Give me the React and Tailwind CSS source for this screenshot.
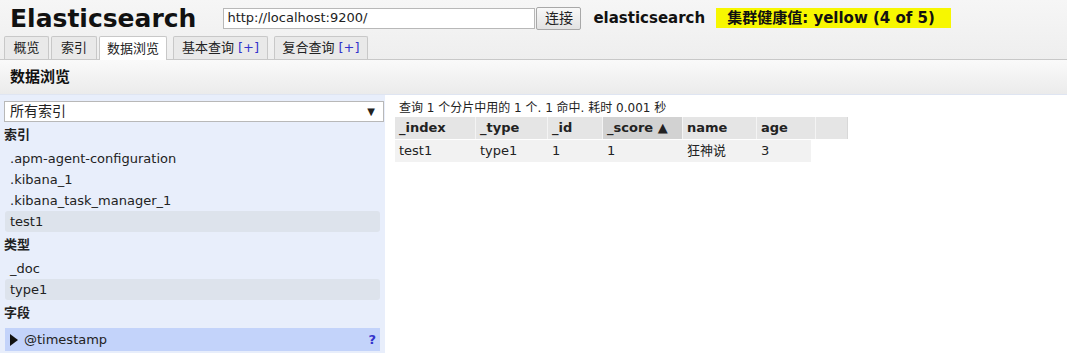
import React from "react";

const F = { fontFamily: '"DejaVu Sans", "Noto Sans CJK SC", sans-serif' };

function Tab({ children, active, w }) {
  return (
    <div
      className={`h-[23px] flex items-center justify-center border border-[#c8c8c8] border-b-0 rounded-t-[2px] text-[13px] text-[#222] ${
        active ? "bg-white h-[24px] -mb-px relative z-10" : "bg-[#e9e9e9]"
      } ${w}`}
    >
      {children}
    </div>
  );
}

function Row({ children, sel }) {
  return (
    <div
      className={`h-[21px] flex items-center pl-[5px] text-[13px] text-[#222] mx-[5px] rounded-[3px] ${
        sel ? "bg-[#dde3ec]" : ""
      }`}
    >
      {children}
    </div>
  );
}

function Section({ children }) {
  return (
    <div className="h-[26px] flex items-center pl-[4px] text-[13px] font-bold text-[#222]">
      {children}
    </div>
  );
}

const cols = [
  { name: "_index", w: "w-[81px]", v: "test1" },
  { name: "_type", w: "w-[72px]", v: "type1" },
  { name: "_id", w: "w-[55px]", v: "1" },
  { name: "_score ▲", w: "w-[80px]", v: "1", sorted: true },
  { name: "name", w: "w-[74px]", v: "狂神说" },
  { name: "age", w: "w-[59px]", v: "3" },
];

export default function App() {
  return (
    <div style={F} className="w-[1067px] h-[353px] bg-white overflow-hidden text-[#111]">
      {/* header */}
      <div className="bg-gradient-to-b from-[#f6f6f6] to-[#eeeeee]">
        <div className="h-[38px] flex items-center pl-[10px]">
          <div className="text-[25px] font-bold leading-none text-[#111] -mt-[2px]">
            Elasticsearch
          </div>
          <div className="ml-[27px] w-[312px] h-[21px] bg-white border border-[#b8b8b8] flex items-center pl-[3px] text-[13px] text-[#222] -mt-[2px]">
            http://localhost:9200/
          </div>
          <div className="ml-[1px] w-[45px] h-[23px] border border-[#a8a8a8] rounded-[2px] bg-gradient-to-b from-[#f8f8f8] to-[#e2e2e2] flex items-center justify-center text-[14px] text-[#222] -mt-[2px]">
            连接
          </div>
          <div className="ml-[12px] text-[15px] font-bold text-[#111] -mt-[2px]">elasticsearch</div>
          <div className="ml-[11px] h-[20px] w-[235px] bg-[#f7f700] flex items-center pl-[11px] text-[15px] font-bold text-[#111] -mt-[2px]">
            集群健康值: yellow (4 of 5)
          </div>
        </div>
        <div className="h-[22px] flex items-end pl-[4px] gap-[2px] border-b border-[#c8c8c8]">
          <Tab w="w-[45px]">概览</Tab>
          <Tab w="w-[46px]">索引</Tab>
          <Tab active w="w-[68px]">数据浏览</Tab>
          <div className="w-[2px]" />
          <Tab w="w-[95px]">
            基本查询&nbsp;<span className="text-[#3333cc]">[+]</span>
          </Tab>
          <div className="w-[2px]" />
          <Tab w="w-[94px]">
            复合查询&nbsp;<span className="text-[#3333cc]">[+]</span>
          </Tab>
        </div>
      </div>
      {/* section header */}
      <div className="h-[35px] bg-gradient-to-b from-[#fafafa] to-[#ebebeb] border-b border-[#dfe5f2] flex items-center pl-[10px] text-[15px] font-bold text-[#111]">
        数据浏览
      </div>
      {/* body */}
      <div className="flex">
        <div className="w-[385px] h-[258px] bg-[#e8eefb] pt-[6px]">
          <div className="mx-[4px] w-[380px] h-[21px] bg-white border border-[#b8b8b8] flex items-center justify-between pl-[5px] pr-[8px] text-[14px] text-[#222]">
            <span>所有索引</span>
            <span className="text-[10px]">▼</span>
          </div>
          <Section>索引</Section>
          <Row>.apm-agent-configuration</Row>
          <Row>.kibana_1</Row>
          <Row>.kibana_task_manager_1</Row>
          <Row sel>test1</Row>
          <Section>类型</Section>
          <Row>_doc</Row>
          <Row sel>type1</Row>
          <Section>字段</Section>
          <div className="mx-[5px] mt-[2px] h-[23px] bg-[#c3d3fa] flex items-center pl-[5px] pr-[4px] justify-between text-[13px] text-[#222]">
            <span className="flex items-center gap-[6px]">
              <svg width="8" height="12" viewBox="0 0 8 12">
                <path d="M0 0 L8 6 L0 12 Z" fill="#111" />
              </svg>
              @timestamp
            </span>
            <span className="text-[#3333cc] font-bold">?</span>
          </div>
        </div>
        <div className="flex-1 pl-[10px] pt-[3px]">
          <div className="h-[19px] flex items-center pl-[4px] text-[12px] text-[#222]">
            查询 1 个分片中用的 1 个. 1 命中. 耗时 0.001 秒
          </div>
          <div className="flex h-[22px] bg-[#e5e5e5] w-[453px]">
            {cols.map((c) => (
              <div
                key={c.name}
                className={`${c.w} h-full flex items-center pl-[4px] text-[13px] font-bold text-[#222] border-r border-[#f4f4f4] ${
                  c.sorted ? "bg-[#d2d2d2]" : ""
                }`}
              >
                {c.name}
              </div>
            ))}
            <div className="w-[32px] h-full border-r border-[#d8d8d8]" />
          </div>
          <div className="flex h-[22px] mt-[1px] bg-[#f2f2f2] w-[416px]">
            {cols.map((c) => (
              <div key={c.name} className={`${c.w} h-full flex items-center pl-[4px] text-[13px] text-[#222] shrink-0`}>
                {c.v}
              </div>
            ))}
          </div>
        </div>
      </div>
    </div>
  );
}
